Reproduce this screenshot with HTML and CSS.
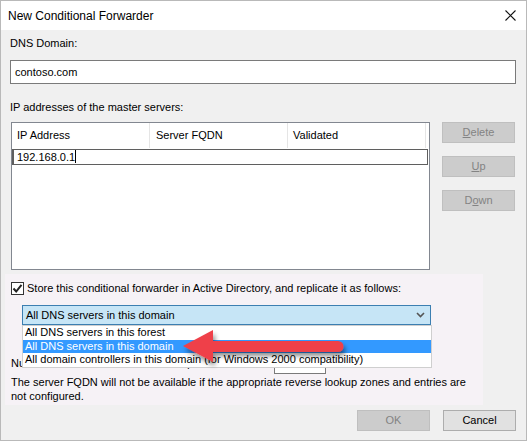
FILE: index.html
```html
<!DOCTYPE html>
<html lang="en">
<head>
    <meta charset="UTF-8">
    <title>New Conditional Forwarder</title>
    <link rel="stylesheet" href="styles.css">
</head>
<body>
    <div class="window">
        <div class="titlebar">
            <span class="title">New Conditional Forwarder</span>
            <svg class="close" width="11" height="11" viewBox="0 0 11 11">
                <path d="M0.5 0.5 L10.5 10.5 M10.5 0.5 L0.5 10.5" stroke="#111" stroke-width="1.1" fill="none"/>
            </svg>
        </div>

        <div class="content">
            <div class="label first">DNS Domain:</div>
            <div class="textbox">contoso.com</div>

            <div class="label">IP addresses of the master servers:</div>
            <div class="servers">
                <div class="grid">
                    <div class="grid-head">
                        <div class="col col-ip">IP Address</div>
                        <div class="col col-fqdn">Server FQDN</div>
                        <div class="col col-valid">Validated</div>
                    </div>
                    <div class="edit-row">192.168.0.1<span class="caret"></span></div>
                </div>
                <div class="side-buttons">
                    <div class="btn disabled"><u>D</u>elete</div>
                    <div class="btn disabled"><u>U</u>p</div>
                    <div class="btn disabled">D<u>o</u>wn</div>
                </div>
            </div>

            <div class="replication">
                <div class="check-row">
                    <span class="checkbox">
                        <svg width="11" height="11" viewBox="0 0 11 11">
                            <path d="M1.5 5.5 L4.2 8.5 L9.5 1.8" stroke="#222" stroke-width="2" fill="none"/>
                        </svg>
                    </span>
                    <span>Store this conditional forwarder in Active Directory, and replicate it as follows:</span>
                </div>
                <div class="combo">
                    <span>All DNS servers in this domain</span>
                    <svg width="9" height="6" viewBox="0 0 9 6">
                        <path d="M1 1 L4.5 4.5 L8 1" stroke="#555" stroke-width="1.6" fill="none"/>
                    </svg>
                </div>
                <div class="timeout-row">
                    <span class="timeout-label">Number of seconds before forward queries time out:</span>
                    <span class="small-box">5</span>
                </div>
                <p class="note">The server FQDN will not be available if the appropriate reverse lookup zones and entries are not configured.</p>
            </div>

            <div class="footer">
                <div class="btn disabled">OK</div>
                <div class="btn">Cancel</div>
            </div>
        </div>

        <!-- open dropdown list lies over the dialog -->
        <ul class="combo-list">
            <li>All DNS servers in this forest</li>
            <li class="selected">All DNS servers in this domain</li>
            <li>All domain controllers in this domain (for Windows 2000 compatibility)</li>
        </ul>

        <svg class="arrow" width="190" height="50" viewBox="0 0 190 50">
            <defs>
                <filter id="shadow" x="-10%" y="-30%" width="130%" height="180%">
                    <feGaussianBlur in="SourceAlpha" stdDeviation="2.5"/>
                    <feOffset dx="2" dy="4"/>
                    <feComponentTransfer><feFuncA type="linear" slope="0.45"/></feComponentTransfer>
                    <feMerge><feMergeNode/><feMergeNode in="SourceGraphic"/></feMerge>
                </filter>
            </defs>
            <g filter="url(#shadow)">
                <path d="M2 20 L32 4 L32 15 L157 15 A5.5 5.5 0 0 1 157 26 L32 26 L32 36 Z" fill="#ef4049"/>
            </g>
        </svg>
    </div>
</body>
</html>
```

FILE: styles.css
```css
body {
    margin: 0;
    font-family: "Liberation Sans", Arial, sans-serif;
    font-size: 11px;
    color: #000;
    background: #fff;
}
.window {
    position: relative;
    width: 527px;
    height: 441px;
    box-sizing: border-box;
    border: 1px solid #b9b9b9;
    background: #f0f0f0;
    overflow: hidden;
}
.titlebar {
    height: 29px;
    background: #fff;
    display: flex;
    align-items: center;
    justify-content: space-between;
    padding: 0 10px 0 7px;
}
.title {
    font-size: 12px;
}
.content {
    padding: 0 10px 0 9px;
}
.label {
    line-height: 16px;
    margin-top: 15px;
}
.label.first {
    margin-top: 5px;
}
.textbox {
    margin-top: 9px;
    height: 24px;
    box-sizing: border-box;
    border: 1px solid #7a7a7a;
    background: #fff;
    padding: 0 4px;
    line-height: 22px;
}
.servers {
    display: flex;
    margin-top: 7px;
}
.grid {
    width: 419px;
    height: 148px;
    margin-left: 1px;
    box-sizing: border-box;
    border: 1px solid #828790;
    background: #fff;
}
.grid-head {
    display: flex;
    height: 25px;
}
.col {
    box-sizing: border-box;
    padding-left: 5px;
    line-height: 25px;
    border-right: 1px solid #e5e5e5;
}
.col-ip { width: 138px; }
.col-fqdn { width: 138px; padding-left: 6px; }
.col-valid { width: 138px; }
.edit-row {
    height: 16px;
    margin: 1px 1px 0 0;
    box-sizing: border-box;
    border: 1px solid #5f5f5f;
    border-left-width: 2px;
    padding-left: 3px;
    line-height: 14px;
}
.caret {
    display: inline-block;
    width: 1px;
    height: 13px;
    background: #000;
    vertical-align: -2px;
}
.side-buttons {
    display: flex;
    flex-direction: column;
    gap: 13px;
    margin-left: 12px;
}
.btn {
    width: 73px;
    height: 21px;
    box-sizing: border-box;
    border: 1px solid #adadad;
    background: #e1e1e1;
    text-align: center;
    line-height: 19px;
}
.btn.disabled {
    background: #cccccc;
    border-color: #bfbfbf;
    color: #838383;
}
.btn u {
    text-decoration: underline;
}
.replication {
    margin: 4px 33px 0 -5px;
    height: 131px;
    box-sizing: border-box;
    background: #f6f2f6;
    padding: 7px 0 0 6px;
}
.check-row {
    display: flex;
    align-items: center;
    gap: 3px;
    line-height: 14px;
}
.checkbox {
    width: 13px;
    height: 13px;
    box-sizing: border-box;
    border: 1px solid #333;
    background: #fff;
    display: flex;
    align-items: center;
    justify-content: center;
}
.combo {
    margin: 10px 0 0 11px;
    width: 409px;
    height: 20px;
    box-sizing: border-box;
    border: 1px solid #3c7fb1;
    background: #c6e5f6;
    display: flex;
    align-items: center;
    justify-content: space-between;
    padding: 0 5px 0 3px;
}
.timeout-row {
    margin-top: 27px;
    display: flex;
    align-items: center;
    height: 22px;
}
.timeout-label {
    width: 263px;
}
.small-box {
    width: 52px;
    height: 22px;
    box-sizing: border-box;
    border: 1px solid #7a7a7a;
    background: #fff;
    padding-left: 4px;
    line-height: 20px;
}
.note {
    margin: 2px 0 0;
    line-height: 13.5px;
}
.footer {
    display: flex;
    justify-content: flex-end;
    gap: 13px;
    margin-top: 5px;
}
.combo-list {
    position: absolute;
    left: 21px;
    top: 324px;
    width: 410px;
    margin: 0;
    padding: 0;
    list-style: none;
    box-sizing: border-box;
    border: 1px solid #cfcfcf;
    background: #fff;
}
.combo-list li {
    height: 13.5px;
    line-height: 13.5px;
    padding-left: 2px;
}
.combo-list li.selected {
    background: #3399ff;
    color: #fff;
}
.arrow {
    position: absolute;
    left: 180px;
    top: 325px;
}
```
